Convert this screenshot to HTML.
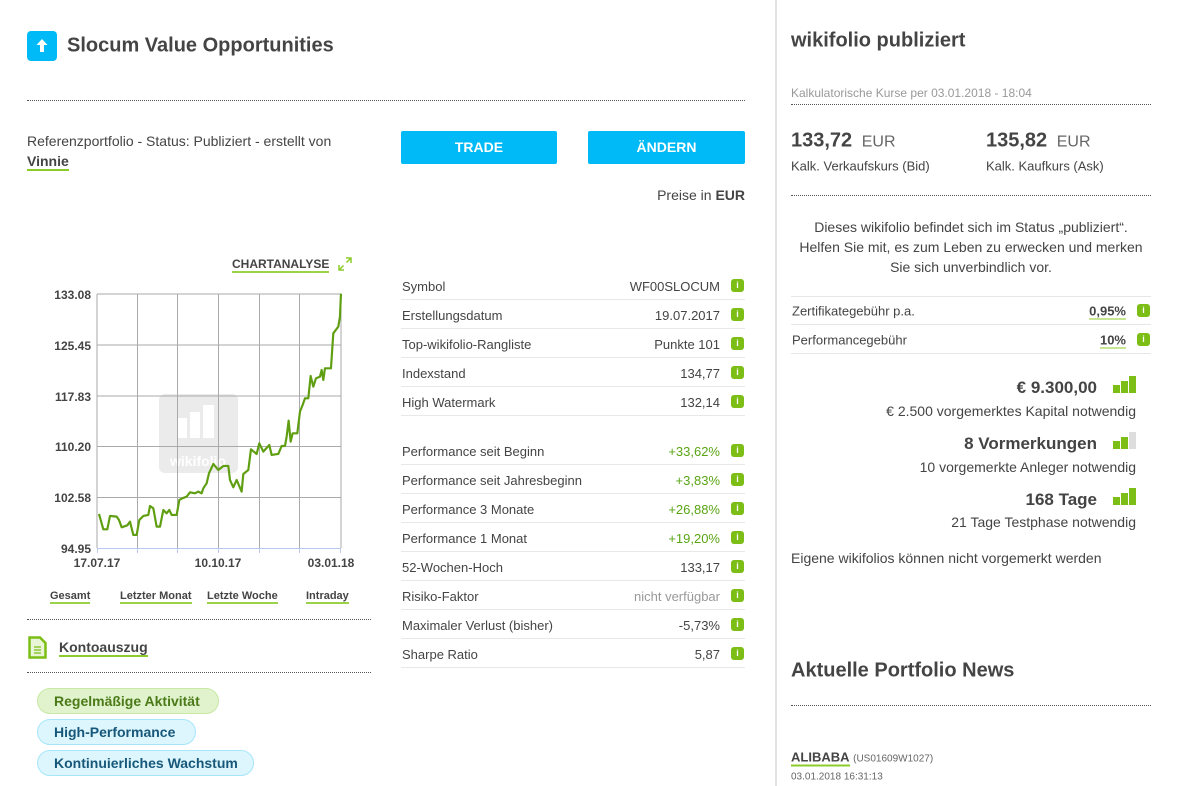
<!DOCTYPE html>
<html><head><meta charset="utf-8">
<style>
*{margin:0;padding:0;box-sizing:border-box}
body{width:1198px;height:786px;overflow:hidden;background:#fff;font-family:"Liberation Sans",sans-serif;color:#444;position:relative}
.a{position:absolute;white-space:nowrap}
.t{transform:translateY(-50%)}
.dot{position:absolute;height:0;border-top:1px dotted #555}
.sol{position:absolute;height:0;border-top:1px solid #e6e6e6}
.btn{position:absolute;background:#00baf7;color:#fff;font-weight:bold;font-size:14px;text-align:center;line-height:33px;border-radius:2px}
.i{position:absolute;width:13px;height:13px;border-radius:3px;background:#7cbd16;color:#fff;font-size:9px;font-weight:bold;text-align:center;line-height:13px}
.ul{border-bottom:2px solid #8ccc2a;font-weight:bold}
.row{position:absolute;left:401px;width:344px;height:29px;border-bottom:1px solid #e8e8e8;font-size:13px}
.row .l{position:absolute;left:1px;top:8px}
.row .r{position:absolute;right:25px;top:8px}
.row .i{right:1px;top:8px}
.g{color:#5aa514}
.pill{position:absolute;white-space:nowrap;height:26px;border-radius:13px;font-weight:bold;font-size:14px;line-height:24px;padding:0 16px}
.pg{background:#e1f3cd;border:1px solid #c8e8a4;color:#4b7a18}
.pb{background:#ddf6fd;border:1px solid #a6e6fa;color:#17587a}
.bars{position:absolute;width:24px;height:17px}
.bars span{position:absolute;bottom:0;width:7px;background:#7cbd16}
.lbl{font-size:11px;font-weight:bold;color:#444;border-bottom:2px solid #9cd24a}
</style></head><body>

<div class="a" style="left:27px;top:31px;width:30px;height:30px;background:#00baf7;border-radius:4px"></div>
<svg class="a" style="left:27px;top:31px" width="30" height="30" viewBox="0 0 30 30"><path d="M15 8 L9.5 14 H13 V21 H17 V14 H20.5 Z" fill="#fff"/></svg>
<div class="a t" style="left:67px;top:46px;font-size:20px;font-weight:bold">Slocum Value Opportunities</div>
<div class="dot" style="left:27px;top:100px;width:718px"></div>

<div class="a t" style="left:27px;top:141px;font-size:14px">Referenzportfolio - Status: Publiziert - erstellt von</div>
<div class="a t" style="left:27px;top:161px;font-size:14px"><span class="ul">Vinnie</span></div>
<div class="btn" style="left:401px;top:131px;width:156px;height:33px">TRADE</div>
<div class="btn" style="left:588px;top:131px;width:157px;height:33px">ÄNDERN</div>
<div class="a t" style="right:453px;top:195px;font-size:14px">Preise in <b>EUR</b></div>

<div class="a t" style="left:232px;top:264px"><span class="lbl" style="font-size:12px">CHARTANALYSE</span></div>
<svg class="a" style="left:337px;top:256px" width="16" height="16" viewBox="0 0 16 16" fill="none" stroke="#8ccc2a" stroke-width="1.5"><path d="M9 2h5v5M14 2L9.5 6.5M7 14H2V9M2 14l4.5-4.5"/></svg>
<svg class="a" style="left:0;top:0" width="380" height="620">
 <rect x="159" y="394" width="79" height="79" rx="6" fill="#ebebeb"/>
 <g fill="#fff"><rect x="177" y="418" width="10" height="20"/><rect x="190" y="412" width="10" height="26"/><rect x="203" y="405" width="11" height="33"/></g>
 <text x="198" y="466" text-anchor="middle" font-family="Liberation Sans" font-weight="bold" font-size="14" fill="#fff">wikifolio</text>
 <g stroke="#aaa" stroke-width="1">
  <line x1="97" y1="294" x2="341" y2="294"/><line x1="97" y1="345" x2="341" y2="345"/><line x1="97" y1="396" x2="341" y2="396"/><line x1="97" y1="446.5" x2="341" y2="446.5"/><line x1="97" y1="497.5" x2="341" y2="497.5"/>
  <line x1="97" y1="294" x2="97" y2="548"/><line x1="137.5" y1="294" x2="137.5" y2="548"/><line x1="177.5" y1="294" x2="177.5" y2="548"/><line x1="218.5" y1="294" x2="218.5" y2="548"/><line x1="259.5" y1="294" x2="259.5" y2="548"/><line x1="299.5" y1="294" x2="299.5" y2="548"/><line x1="341" y1="294" x2="341" y2="548"/>
 </g>
 <g stroke="#b8c8ee"><line x1="97" y1="548.5" x2="341" y2="548.5"/><line x1="97.5" y1="548" x2="97.5" y2="553"/><line x1="137.5" y1="548" x2="137.5" y2="553"/><line x1="177.5" y1="548" x2="177.5" y2="553"/><line x1="218.5" y1="548" x2="218.5" y2="553"/><line x1="259.5" y1="548" x2="259.5" y2="553"/><line x1="299.5" y1="548" x2="299.5" y2="553"/><line x1="340.5" y1="548" x2="340.5" y2="553"/></g>
 <g transform="translate(20,250) scale(0.3333)"><polyline fill="none" stroke="#5e9e10" stroke-width="6.5" stroke-linejoin="round" points="237,792 250,838 262,838 270,798 290,800 297,810 305,832 322,826 330,815 340,855 350,855 358,810 370,798 385,795 390,768 400,775 410,830 420,830 430,780 440,790 448,780 455,795 470,795 478,750 487,745 500,740 510,727 525,730 535,725 545,730 550,715 560,700 567,670 580,642 595,660 610,648 625,648 630,690 640,712 650,690 665,725 670,672 685,660 693,598 710,612 718,580 730,605 748,585 755,615 775,612 785,588 795,588 800,560 806,512 812,575 818,550 832,550 840,485 848,465 855,445 865,445 872,378 880,410 888,385 900,380 905,360 910,390 915,355 933,355 940,250 955,230 960,200 963,131"/></g>
 <g font-family="Liberation Sans" font-weight="bold" font-size="12" fill="#444" text-anchor="end">
  <text x="91" y="299">133.08</text><text x="91" y="350">125.45</text><text x="91" y="401">117.83</text><text x="91" y="451">110.20</text><text x="91" y="502">102.58</text><text x="91" y="553">94.95</text>
 </g>
 <g font-family="Liberation Sans" font-weight="bold" font-size="12" fill="#444" text-anchor="middle">
  <text x="97" y="567">17.07.17</text><text x="218" y="567">10.10.17</text><text x="331" y="567">03.01.18</text>
 </g>
</svg>
<div class="a t" style="left:50px;top:595px"><span class="lbl">Gesamt</span></div>
<div class="a t" style="left:120px;top:595px"><span class="lbl">Letzter Monat</span></div>
<div class="a t" style="left:207px;top:595px"><span class="lbl">Letzte Woche</span></div>
<div class="a t" style="left:306px;top:595px"><span class="lbl">Intraday</span></div>
<div class="dot" style="left:27px;top:619px;width:344px"></div>

<svg class="a" style="left:28px;top:636px" width="19" height="23" viewBox="0 0 19 23"><path d="M1.5 1.5H12L17.5 7V21.5H1.5Z" fill="#e8f5d6" stroke="#7cbd16" stroke-width="2.5"/><path d="M6 11h7M6 14h7M6 17h7" stroke="#7cbd16" stroke-width="1.3"/></svg>
<div class="a t" style="left:59px;top:647px;font-size:14px"><span class="ul">Kontoauszug</span></div>
<div class="dot" style="left:27px;top:672px;width:344px"></div>

<div class="pill pg" style="left:37px;top:688px;width:182px">Regelmäßige Aktivität</div>
<div class="pill pb" style="left:37px;top:719px;width:159px">High-Performance</div>
<div class="pill pb" style="left:37px;top:750px;width:217px">Kontinuierliches Wachstum</div>

<div class="row" style="top:271px"><span class="l">Symbol</span><span class="r">WF00SLOCUM</span><span class="i">i</span></div>
<div class="row" style="top:300px"><span class="l">Erstellungsdatum</span><span class="r">19.07.2017</span><span class="i">i</span></div>
<div class="row" style="top:329px"><span class="l">Top-wikifolio-Rangliste</span><span class="r">Punkte 101</span><span class="i">i</span></div>
<div class="row" style="top:358px"><span class="l">Indexstand</span><span class="r">134,77</span><span class="i">i</span></div>
<div class="row" style="top:387px"><span class="l">High Watermark</span><span class="r">132,14</span><span class="i">i</span></div>
<div class="row" style="top:436px"><span class="l">Performance seit Beginn</span><span class="r g">+33,62%</span><span class="i">i</span></div>
<div class="row" style="top:465px"><span class="l">Performance seit Jahresbeginn</span><span class="r g">+3,83%</span><span class="i">i</span></div>
<div class="row" style="top:494px"><span class="l">Performance 3 Monate</span><span class="r g">+26,88%</span><span class="i">i</span></div>
<div class="row" style="top:523px"><span class="l">Performance 1 Monat</span><span class="r g">+19,20%</span><span class="i">i</span></div>
<div class="row" style="top:552px"><span class="l">52-Wochen-Hoch</span><span class="r">133,17</span><span class="i">i</span></div>
<div class="row" style="top:581px"><span class="l">Risiko-Faktor</span><span class="r" style="color:#999">nicht verfügbar</span><span class="i">i</span></div>
<div class="row" style="top:610px"><span class="l">Maximaler Verlust (bisher)</span><span class="r">-5,73%</span><span class="i">i</span></div>
<div class="row" style="top:639px"><span class="l">Sharpe Ratio</span><span class="r">5,87</span><span class="i">i</span></div>

<div class="a" style="left:775px;top:0;width:2px;height:786px;background:#e3e3e3"></div>
<div class="a t" style="left:791px;top:41px;font-size:20px;font-weight:bold">wikifolio publiziert</div>
<div class="a t" style="left:791px;top:93px;font-size:12px;color:#999">Kalkulatorische Kurse per 03.01.2018 - 18:04</div>
<div class="dot" style="left:791px;top:104px;width:360px"></div>
<div class="a t" style="left:791px;top:141px;font-size:20px;font-weight:bold">133,72 <span style="font-size:16px;font-weight:normal;color:#666;margin-left:4px">EUR</span></div>
<div class="a t" style="left:986px;top:141px;font-size:20px;font-weight:bold">135,82 <span style="font-size:16px;font-weight:normal;color:#666;margin-left:4px">EUR</span></div>
<div class="a t" style="left:791px;top:166px;font-size:13px">Kalk. Verkaufskurs (Bid)</div>
<div class="a t" style="left:986px;top:166px;font-size:13px">Kalk. Kaufkurs (Ask)</div>
<div class="dot" style="left:791px;top:195px;width:360px"></div>
<div class="a" style="left:791px;top:217px;width:360px;text-align:center;font-size:14px;line-height:20px;white-space:normal">Dieses wikifolio befindet sich im Status „publiziert“.<br>Helfen Sie mit, es zum Leben zu erwecken und merken<br>Sie sich unverbindlich vor.</div>
<div class="sol" style="left:791px;top:296px;width:360px"></div>
<div class="a t" style="left:792px;top:311px;font-size:13px">Zertifikategebühr p.a.</div>
<div class="a t" style="right:72px;top:311px;font-size:13px"><span class="ul" style="border-bottom-width:1px">0,95%</span></div>
<div class="i" style="left:1137px;top:304px">i</div>
<div class="sol" style="left:791px;top:324px;width:360px"></div>
<div class="a t" style="left:792px;top:340px;font-size:13px">Performancegebühr</div>
<div class="a t" style="right:72px;top:340px;font-size:13px"><span class="ul" style="border-bottom-width:1px">10%</span></div>
<div class="i" style="left:1137px;top:333px">i</div>
<div class="sol" style="left:791px;top:353px;width:360px"></div>

<div class="a t" style="right:101px;top:388px;font-size:17px;font-weight:bold">€ 9.300,00</div>
<div class="bars" style="left:1113px;top:376px"><span style="left:0;height:8px"></span><span style="left:8px;height:12px"></span><span style="left:16px;height:17px"></span></div>
<div class="a t" style="right:62px;top:411px;font-size:14px">€ 2.500 vorgemerktes Kapital notwendig</div>
<div class="a t" style="right:101px;top:444px;font-size:17px;font-weight:bold">8 Vormerkungen</div>
<div class="bars" style="left:1113px;top:432px"><span style="left:0;height:8px"></span><span style="left:8px;height:12px"></span><span style="left:16px;height:17px;background:#ddd"></span></div>
<div class="a t" style="right:62px;top:467px;font-size:14px">10 vorgemerkte Anleger notwendig</div>
<div class="a t" style="right:101px;top:500px;font-size:17px;font-weight:bold">168 Tage</div>
<div class="bars" style="left:1113px;top:488px"><span style="left:0;height:8px"></span><span style="left:8px;height:12px"></span><span style="left:16px;height:17px"></span></div>
<div class="a t" style="right:62px;top:522px;font-size:14px">21 Tage Testphase notwendig</div>
<div class="a t" style="left:791px;top:558px;font-size:14px">Eigene wikifolios können nicht vorgemerkt werden</div>

<div class="a t" style="left:791px;top:671px;font-size:20px;font-weight:bold">Aktuelle Portfolio News</div>
<div class="dot" style="left:791px;top:705px;width:360px"></div>
<div class="a t" style="left:791px;top:757px;font-size:13px"><span class="ul">ALIBABA</span> <span style="font-size:10px;color:#666">(US01609W1027)</span></div>
<div class="a t" style="left:791px;top:777px;font-size:10px;color:#666">03.01.2018 16:31:13</div>
</body></html>
